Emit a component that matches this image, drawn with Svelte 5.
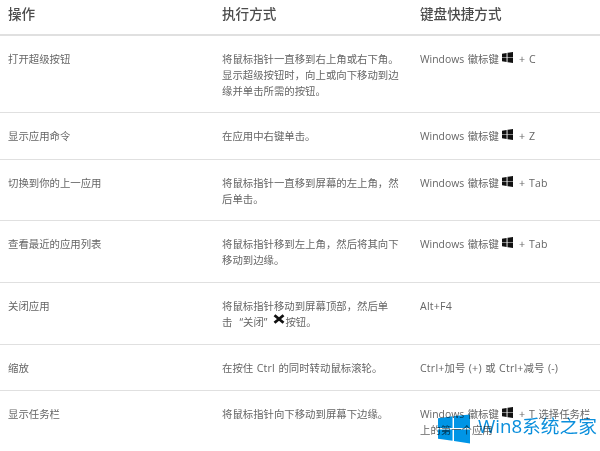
<script>
  const rows = [
    { action: "打开超级按钮", how: ["将鼠标指针一直移到右上角或右下角。", "显示超级按钮时，向上或向下移动到边", "缘并单击所需的按钮。"], key: "C" },
    { action: "显示应用命令", how: ["在应用中右键单击。"], key: "Z" },
    { action: "切换到你的上一应用", how: ["将鼠标指针一直移到屏幕的左上角，然", "后单击。"], key: "Tab" },
    { action: "查看最近的应用列表", how: ["将鼠标指针移到左上角，然后将其向下", "移动到边缘。"], key: "Tab" },
  ];
</script>

{#snippet winKey()}
  Windows 徽标键
  <svg class="win" viewBox="0 0 12 12" aria-hidden="true">
    <path d="M0 1.8 5 1v4.6H0zM6 .9 12 0v5.6H6zM0 6.4h5V11l-5-.8zM6 6.4h6V12l-6-.9z" />
  </svg>
{/snippet}

<div class="page">
  <div class="row head">
    <div>操作</div>
    <div>执行方式</div>
    <div>键盘快捷方式</div>
  </div>

  {#each rows as row}
    <div class="row">
      <div>{row.action}</div>
      <div>
        {#each row.how as line}
          <div>{line}</div>
        {/each}
      </div>
      <div>{@render winKey()} <span class="lat">+ {row.key}</span></div>
    </div>
  {/each}

  <div class="row">
    <div>关闭应用</div>
    <div>
      <div>将鼠标指针移动到屏幕顶部，然后单</div>
      <div>击&nbsp;&nbsp;“关闭”<svg class="close" viewBox="0 0 12 10" aria-hidden="true"><path d="M1.500 1.200l9 7.600M10.500 1.200l-9 7.600" /></svg>按钮。</div>
    </div>
    <div><span class="lat">Alt+F4</span></div>
  </div>

  <div class="row">
    <div>缩放</div>
    <div>在按住 <span class="lat">Ctrl</span> 的同时转动鼠标滚轮。</div>
    <div><span class="lat">Ctrl+</span>加号 <span class="lat">(+)</span> 或 <span class="lat">Ctrl+</span>减号 <span class="lat">(-)</span></div>
  </div>

  <div class="row last">
    <div>显示任务栏</div>
    <div>将鼠标指针向下移动到屏幕下边缘。</div>
    <div>
      <div>{@render winKey()} <span class="lat">+ T</span> 选择任务栏</div>
      <div>上的第一个应用</div>
    </div>
  </div>

  <div class="mark">
    <svg class="mark-logo" viewBox="0 0 33 30" aria-hidden="true">
      <path d="M0 4 15 1.800V14H0zM16.500 1.600 33 0v14H16.500zM0 15.500h15v11.700L0 25zM16.500 15.500H33V30l-16.500-2.600z" />
    </svg>
    <span>Win8系统之家</span>
  </div>
</div>

<style>
  :global(body) {
    margin: 0;
    background: #fff;
  }

  .page {
    position: relative;
    display: grid;
    grid-template-rows: 36px 77px 47px 61px 62px 62px 46px 1fr;
    width: 600px;
    height: 451px;
    overflow: hidden;
    font-family: "Open Sans", "Noto Sans CJK SC", sans-serif;
    font-size: 10.4px;
    line-height: 16px;
    word-spacing: 0.8px;
    color: #666;
  }

  .row {
    display: grid;
    grid-template-columns: 214px 198px 172px;
    box-sizing: border-box;
    padding: 15px 0 0 8px;
    border-bottom: 1px solid #e0e0e0;
  }

  .head {
    padding-top: 5px;
    font-size: 13.6px;
    font-weight: 500;
    line-height: 18px;
    color: #4c4c4c;
    border-bottom-width: 2px;
  }

  .last {
    border-bottom: none;
  }

  .lat {
    font-size: 10.6px;
    letter-spacing: 0.2px;
  }

  .win {
    width: 11px;
    height: 11px;
    margin: 0 2px 0 0;
    vertical-align: 0;
    fill: #111;
  }

  .close {
    width: 12px;
    height: 10px;
    margin: 0 0 0 6px;
    vertical-align: 2px;
    fill: none;
    stroke: #111;
    stroke-width: 2.800;
  }

  .mark {
    position: absolute;
    left: 438px;
    top: 414px;
    display: flex;
    align-items: flex-start;
    gap: 8px;
    line-height: 26px;
    color: #0b8fdc;
    white-space: nowrap;
    mix-blend-mode: multiply;
  }

  .mark-logo {
    width: 32px;
    height: 30px;
    fill: #0095e6;
  }

  .mark span {
    font-size: 18.7px;
    margin-top: -1px;
  }
</style>
